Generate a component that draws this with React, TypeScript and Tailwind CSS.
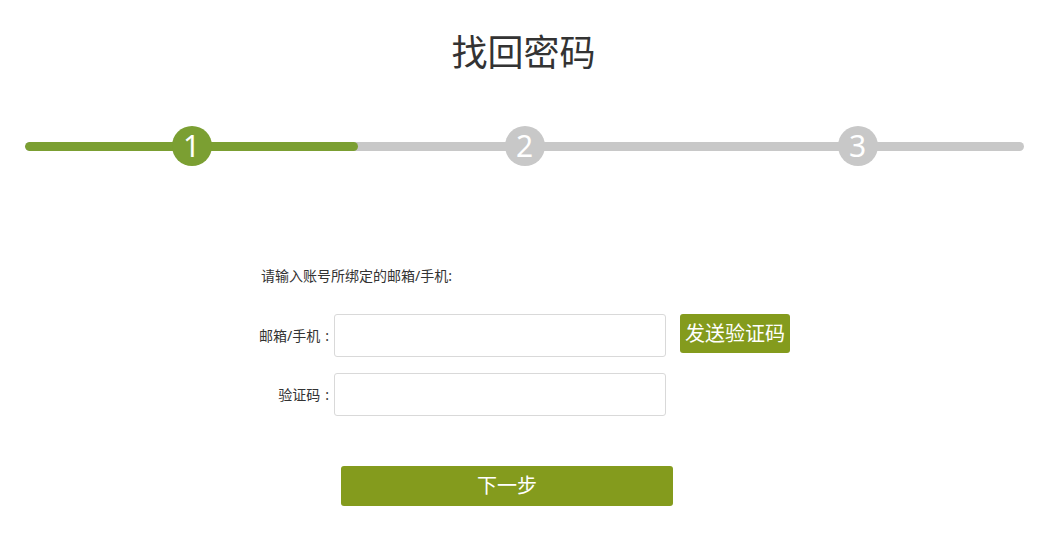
import { useState } from "react";

const steps = [1, 2, 3];

export default function App() {
  const [current] = useState(1);
  const [account, setAccount] = useState("");
  const [code, setCode] = useState("");

  return (
    <div
      className="min-h-[540px] bg-white text-[#333]"
      style={{ fontFamily: '"Noto Sans", "Noto Sans CJK SC", sans-serif' }}
    >
      <h1 className="pt-[31px] text-center text-[36px] leading-[43px] font-normal text-[#333]">
        找回密码
      </h1>

      {/* progress */}
      <div className="mt-[52px] ml-[25px] mr-[23px] relative h-[40px] flex items-center">
        <div className="w-full h-[9px] rounded-full bg-[#c8c8c8] overflow-hidden">
          <div className="w-1/3 h-full rounded-full bg-[#7b9f32]" />
        </div>
        <div className="absolute inset-0 grid grid-cols-3">
          {steps.map((s) => (
            <div key={s} className="flex justify-center items-center">
              <span
                className={`w-[40px] h-[40px] rounded-full flex items-center justify-center text-white text-[30px] leading-none ${
                  s <= current ? "bg-[#7b9f32]" : "bg-[#c8c8c8]"
                }`}
              >
                {s}
              </span>
            </div>
          ))}
        </div>
      </div>

      {/* form */}
      <div className="mx-auto w-[537px] mt-[100px]">
        <p className="pl-[6px] text-[14px] leading-[20px]">请输入账号所绑定的邮箱/手机:</p>

        <div className="mt-[28px] flex items-start">
          <label className="w-[78px] h-[43px] flex items-center justify-end text-[14px] whitespace-nowrap">
            邮箱/手机<span className="ml-[5px] mr-[4px]">:</span>
          </label>
          <input
            value={account}
            onChange={(e) => setAccount(e.target.value)}
            className="ml-[1px] w-[332px] h-[43px] border border-[#d9d9d9] rounded-[3px] px-2 text-[14px] outline-none"
          />
          <button className="ml-[14px] w-[110px] h-[39px] rounded-[3px] bg-[#849b1d] text-white text-[20px] leading-none whitespace-nowrap">
            发送验证码
          </button>
        </div>

        <div className="mt-[16px] flex items-start">
          <label className="w-[78px] h-[43px] flex items-center justify-end text-[14px] whitespace-nowrap">
            验证码<span className="ml-[5px] mr-[4px]">:</span>
          </label>
          <input
            value={code}
            onChange={(e) => setCode(e.target.value)}
            className="ml-[1px] w-[332px] h-[43px] border border-[#d9d9d9] rounded-[3px] px-2 text-[14px] outline-none"
          />
        </div>

        <button className="mt-[50px] ml-[86px] w-[332px] h-[40px] rounded-[3px] bg-[#849b1d] text-white text-[20px] leading-none">
          下一步
        </button>
      </div>
    </div>
  );
}
